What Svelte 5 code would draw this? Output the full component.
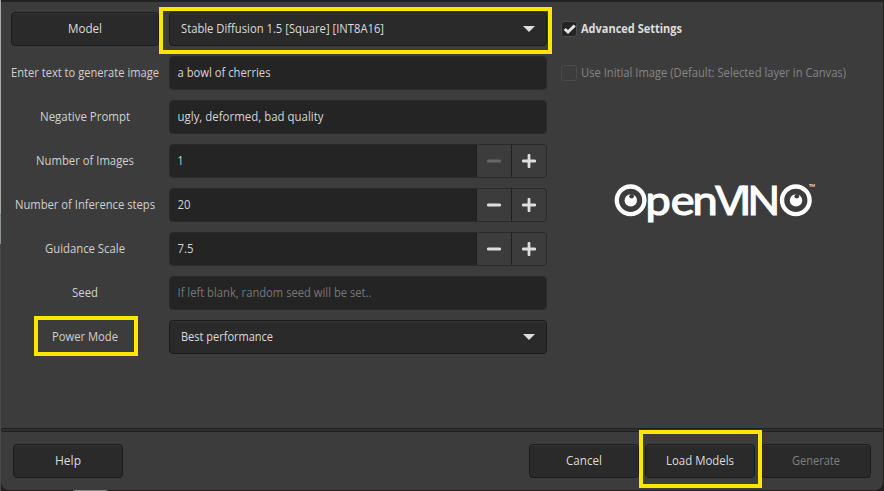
<script>
  const rows = [
    { label: 'Enter text to generate image', kind: 'entry', value: 'a bowl of cherries', lw: 148, vw: 93 },
    { label: 'Negative Prompt', kind: 'entry', value: 'ugly, deformed, bad quality', lw: 90, vw: 146 },
    { label: 'Number of Images', kind: 'spin', value: '1', lw: 98, vw: 6, min: true },
    { label: 'Number of Inference steps', kind: 'spin', value: '20', lw: 140, vw: 13 },
    { label: 'Guidance Scale', kind: 'spin', value: '7.5', lw: 80, vw: 16 },
    { label: 'Seed', kind: 'entry', value: 'If left blank, random seed will be set..', lw: 26, vw: 194, hint: true },
    { label: 'Power Mode', kind: 'combo', value: 'Best performance', lw: 66, vw: 92 }
  ];
</script>

{#snippet label(text, width)}
  <svg class="label" width={width} height="18" style:width="{width}px">
    <text x="0" y="13" textLength={width} lengthAdjust="spacingAndGlyphs">{text}</text>
  </svg>
{/snippet}

{#snippet combo(text, width)}
  <div class="button combo">
    {@render label(text, width)}
    <svg class="arrow" width="12" height="6" viewBox="0 0 12 6"><path d="M0 0H12L6 6Z" fill="#dedede" /></svg>
  </div>
{/snippet}

<div class="backdrop">
  <div class="dialog">
    <div class="main">
      <div class="form">
        <div class="row">
          <div class="button model">{@render label('Model', 34)}</div>
          <div class="marked">{@render combo('Stable Diffusion 1.5 [Square] [INT8A16]', 203)}<i class="mark top"></i></div>
        </div>
        {#each rows as row}
          <div class="row">
            <div class="name" class:marked={row.kind === 'combo'}>
              {@render label(row.label, row.lw)}
              {#if row.kind === 'combo'}<i class="mark power"></i>{/if}
            </div>
            {#if row.kind === 'combo'}
              {@render combo(row.value, row.vw)}
            {:else}
              <div class="entry" class:spin={row.kind === 'spin'} class:hint={row.hint}>
                <div class="value">{@render label(row.value, row.vw)}</div>
                {#if row.kind === 'spin'}
                  <div class="step" class:off={row.min}>
                    <svg width="14" height="14" viewBox="0 0 14 14"><path d="M1.2 7H12.8" /></svg>
                  </div>
                  <div class="step">
                    <svg width="14" height="14" viewBox="0 0 14 14"><path d="M1.2 7H12.8M7 1.2V12.8" /></svg>
                  </div>
                {/if}
              </div>
            {/if}
          </div>
        {/each}
      </div>
      <div class="side">
        <div class="option strong">
          <span class="check on"><svg width="14" height="14" viewBox="0 0 14 14"><path d="M2.7 7L6 10L12.7 3.5" /></svg></span>
          {@render label('Advanced Settings', 101)}
        </div>
        <div class="option dim">
          <span class="check"></span>
          {@render label('Use Initial Image (Default: Selected layer in Canvas)', 265)}
        </div>
        <svg class="logo" width="204" height="50" viewBox="0 0 204 50" aria-label="OpenVINO">
          <g fill="none" stroke="#fff" stroke-width="4.4">
            <circle cx="17.6" cy="20.3" r="13.8" />
            <circle cx="182.8" cy="20.3" r="13.8" />
          </g>
          <g fill="#fff">
            <circle cx="17.8" cy="20.4" r="6.2" />
            <circle cx="183" cy="20.4" r="6.2" />
          </g>
          <g fill="#3c3c3c">
            <circle cx="18.6" cy="16.2" r="2.3" />
            <circle cx="183.8" cy="16.2" r="2.3" />
          </g>
          <text class="word" transform="translate(0 35) scale(1.1 1)" y="0" x="29.6 52.5 72.2">pen</text>
          <text class="word" transform="translate(0 35) scale(1.04 1)" y="0" x="98.4 121.3 129.4">VIN</text>
          <text class="tm" x="196" y="7.4" textLength="6" lengthAdjust="spacingAndGlyphs">TM</text>
        </svg>
      </div>
    </div>
    <div class="separator"></div>
    <div class="actions">
      <div class="button">{@render label('Help', 26)}</div>
      <span class="space"></span>
      <div class="button">{@render label('Cancel', 36)}</div>
      <div class="button marked">{@render label('Load Models', 68)}<i class="mark load"></i></div>
      <div class="button faded">{@render label('Generate', 48)}</div>
    </div>
  </div>
  <i class="glint"></i>
  <i class="edge"></i>
</div>

<style>
  :global(body) { margin: 0; overflow: hidden; }
  .backdrop {
    position: relative; width: 884px; height: 491px; box-sizing: border-box; padding: 0 1px 1px;
    background: #211f20; overflow: hidden;
    font-family: "Open Sans", "Noto Sans", sans-serif; font-size: 12px; color: #dcdcdc;
  }
  .dialog {
    height: 490px; box-sizing: border-box; display: flex; flex-direction: column;
    border-top: 2px solid #222; border-radius: 0 0 8px 8px; background: #3c3c3c;
  }
  .main { height: 416px; box-sizing: border-box; display: flex; gap: 14px; padding: 10px 0 0 10px; margin-bottom: 10px; }
  .form { display: flex; flex-direction: column; gap: 10px; width: 536px; }
  .row { display: flex; gap: 10px; height: 34px; }
  .name { width: 148px; display: flex; align-items: center; justify-content: center; color: #d0d0d0; }
  .label { display: block; flex: none; overflow: visible; }
  .label text { fill: currentColor; }
  .button {
    width: 110px; height: 34px; box-sizing: border-box; display: flex; align-items: center; justify-content: center;
    border: 1px solid #1b1b1b; border-radius: 4px; background: #2a2a2a; box-shadow: inset 0 1px #363636;
  }
  .button.model { width: 148px; }
  .button.combo { width: 378px; justify-content: space-between; padding: 0 11px; }
  .marked { position: relative; }
  .mark { position: absolute; box-sizing: border-box; border: 4px solid #ffe500; z-index: 2; }
  .top { left: -10px; top: -5px; width: 393px; height: 47px; }
  .power { left: 23px; top: -4px; width: 104px; height: 40px; }
  .load { left: -7px; top: -15px; width: 123px; height: 58px; }
  .entry {
    width: 378px; height: 34px; box-sizing: border-box; display: flex; border: 1px solid #2a2a2a;
    border-radius: 4px; background: #242424; overflow: hidden; color: #d4d4d4;
  }
  .entry.spin { background: #3c3c3c; }
  .value { flex: 1; display: flex; align-items: center; padding-left: 7px; background: #242424; }
  .value :global(text) { transform: translateX(.5px); }
  .entry.hint { color: #777; }
  .step {
    width: 34px; display: flex; align-items: center; justify-content: center;
    border-left: 1px solid #1f1f1f; color: #dedede;
  }
  .step path { stroke: currentColor; stroke-width: 2.8; stroke-linecap: round; fill: none; }
  .step.off { color: #686868; }
  .side { width: 310px; display: flex; flex-direction: column; gap: 10px; }
  .option { height: 34px; display: flex; align-items: center; gap: 4px; }
  .strong { font-weight: 700; }
  .dim { color: #858585; }
  .check { width: 16px; height: 16px; box-sizing: border-box; border: 1px solid #4b4b4b; border-radius: 3px; }
  .check.on { background: #242424; }
  .check svg { display: block; }
  .check path { fill: none; stroke: #e4e4e4; stroke-width: 3; }
  .logo { display: block; margin: 80px 0 0 52px; overflow: visible; }
  .word { font: 400 41px Lato, sans-serif; fill: #fff; stroke: #fff; stroke-width: 1.2px; }
  .tm { font: 700 4.2px Lato, sans-serif; fill: #fff; }
  .separator { height: 4px; box-sizing: border-box; border: 1px solid #202020; background: #303030; border-radius: 2px; }
  .actions { display: flex; gap: 6px; padding: 12px 12px 0; }
  .space { flex: 1; }
  .faded { color: #808080; }
  .glint { position: absolute; left: 74px; bottom: 0; width: 33px; height: 1px; background: #858585; }
  .edge {
    position: absolute; left: 0; top: 0; width: 1px; height: 491px;
    background: linear-gradient(#aaa 214px, #707070 214px, #8c9492 216px, #8c9492 244px, #484848 244px);
  }
</style>
